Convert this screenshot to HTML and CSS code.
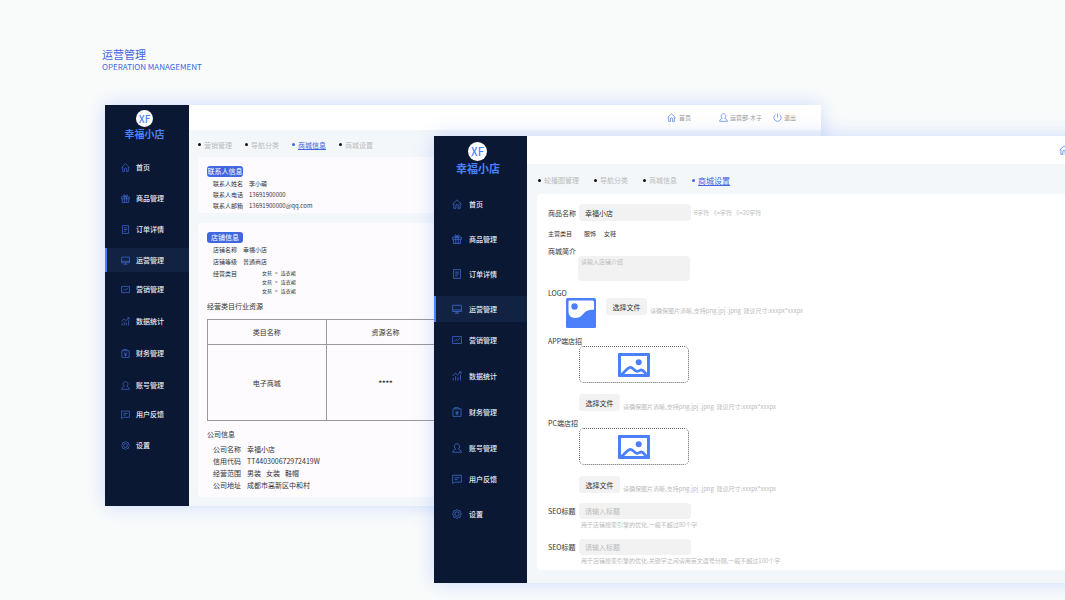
FILE: index.html
```html
<!DOCTYPE html>
<html lang="zh-CN">
	<head>
		<meta charset="utf-8" />
		<meta name="viewport" content="width=device-width, initial-scale=1" />
		<title>运营管理</title>
		<link rel="stylesheet" href="styles.css">
	</head>
	<body>
		<!-- 图标 -->
		<svg class="sprite" aria-hidden="true">
			<symbol id="i-home" viewBox="0 0 16 16"><path d="M.7 8.500 8 1.300l7.300 7.200M3 7v8h3.200v-4.500a1.800 1.800 0 0 1 3.600 0V15H13V7"/></symbol>
			<symbol id="i-gift" viewBox="0 0 16 16"><path d="M1 5h14v3.500H1zM2.300 8.500V15h11.400V8.500M6 5v10M10 5v10M8 5C4 5 3.500 1.500 5.500 1.500S8 5 8 5s.500-3.500 2.500-3.500S12 5 8 5"/></symbol>
			<symbol id="i-order" viewBox="0 0 16 16"><path d="M2.500 1h11v14h-11zM5 5h6M5 8h6M5 11h4"/></symbol>
			<symbol id="i-screen" viewBox="0 0 16 16"><path d="M1 2h14v10H1zM1 9.500h14M8 12v2.500M4.500 14.700h7"/></symbol>
			<symbol id="i-chart" viewBox="0 0 16 16"><path d="M1 2.500h14v11H1zM3.500 10l3-3 2.200 2 4-4"/></symbol>
			<symbol id="i-data" viewBox="0 0 16 16"><path d="M2 15v-4M5.700 15V8.500M9.500 15v-5M13.500 15V6M1 8l4.500-4.500 3.200 3L14 1.500M11 1.500h3.500v3"/></symbol>
			<symbol id="i-money" viewBox="0 0 16 16"><path d="M1.500 3H4V1h6.500l2 2h2v12h-13zM4 3h8.500M5.500 6 8 9l2.500-3M8 9v4M5.700 9h4.600M5.700 11h4.600"/></symbol>
			<symbol id="i-user" viewBox="0 0 16 16"><path d="M6 9.300a4.300 4.300 0 1 1 4 0M6 9.300C3.500 10 1.500 12 1 14.800h14C14.500 12 12.500 10 10 9.300"/></symbol>
			<symbol id="i-chat" viewBox="0 0 16 16"><path d="M1 2h14v11H4.500L1 15zM4 6h8M4 9h5"/></symbol>
			<symbol id="i-set" viewBox="0 0 16 16"><path d="m8 .8 2.200 1.700 2.900.400.400 2.900L15.200 8l-1.700 2.200-.4 2.900-2.900.4L8 15.200l-2.200-1.700-2.900-.4-.4-2.900L.8 8l1.700-2.200.4-2.900 2.900-.4z"/><circle cx="8" cy="8" r="3.500"/></symbol>
			<symbol id="i-power" viewBox="0 0 16 16"><path d="M8 1v7M4.500 2.800a6.500 6.500 0 1 0 7 0"/></symbol>
			<symbol id="i-photo" viewBox="0 0 32 24">
				<path fill="#4c80fa" fill-rule="evenodd" d="M1 0h30a1 1 0 0 1 1 1v22a1 1 0 0 1-1 1H1a1 1 0 0 1-1-1V1a1 1 0 0 1 1-1zM3 3v18h26V3z"/>
				<circle cx="20.700" cy="9.200" r="3" fill="#4c80fa"/>
				<path fill="none" stroke="#4c80fa" stroke-width="2.800" d="M3.500 21.500C7.500 19 9 14.300 12.500 14.300c3.200 0 3.500 4 6.500 4 2 0 2.500-1.300 4.300-1.300 2.200 0 3.200 2.500 5.200 4.500"/>
			</symbol>
		</svg>

		<header class="title">
			<h1>运营管理</h1>
			<p>OPERATION MANAGEMENT</p>
		</header>

		<main class="stage">
			<!-- 商城信息 -->
			<section class="window back">
				<aside class="side">
					<div class="logo">XF</div>
					<div class="brand">幸福小店</div>
					<nav class="menu">
						<ul>
							<li><a href="#"><svg class="icon"><use href="#i-home"/></svg>首页</a></li>
							<li><a href="#"><svg class="icon"><use href="#i-gift"/></svg>商品管理</a></li>
							<li><a href="#"><svg class="icon"><use href="#i-order"/></svg>订单详情</a></li>
							<li><a href="#" class="active"><svg class="icon"><use href="#i-screen"/></svg>运营管理</a></li>
						</ul>
						<ul class="wide">
							<li><a href="#"><svg class="icon"><use href="#i-chart"/></svg>营销管理</a></li>
							<li><a href="#"><svg class="icon"><use href="#i-data"/></svg>数据统计</a></li>
							<li><a href="#"><svg class="icon"><use href="#i-money"/></svg>财务管理</a></li>
							<li><a href="#"><svg class="icon"><use href="#i-user"/></svg>账号管理</a></li>
						</ul>
						<ul>
							<li><a href="#"><svg class="icon"><use href="#i-chat"/></svg>用户反馈</a></li>
							<li><a href="#"><svg class="icon"><use href="#i-set"/></svg>设置</a></li>
						</ul>
					</nav>
				</aside>
				<div class="content">
					<div class="topbar">
						<a href="#" class="go-home"><svg class="icon"><use href="#i-home"/></svg>首页</a>
						<a href="#"><svg class="icon"><use href="#i-user"/></svg>运营部-木子</a>
						<a href="#"><svg class="icon"><use href="#i-power"/></svg>退出</a>
					</div>
					<nav class="tabs">
						<a href="#">营销管理</a>
						<a href="#">导航分类</a>
						<a href="#" class="active">商城信息</a>
						<a href="#">商城设置</a>
					</nav>
					<div class="card">
						<h2 class="tag">联系人信息</h2>
						<dl class="info">
							<dt>联系人姓名</dt><dd>李小萌</dd>
							<dt>联系人电话</dt><dd>13691900000</dd>
							<dt>联系人邮箱</dt><dd>13691900000@qq.com</dd>
						</dl>
					</div>
					<div class="card shop">
						<h2 class="tag">店铺信息</h2>
						<dl class="info">
							<dt>店铺名称</dt><dd>幸福小店</dd>
							<dt>店铺等级</dt><dd>普通商店</dd>
							<dt>经营类目</dt>
							<dd>
								<ul class="kinds">
									<li><span>女孩</span><span>&gt;</span><span>连衣裙</span></li>
									<li><span>女孩</span><span>&gt;</span><span>连衣裙</span></li>
									<li><span>女孩</span><span>&gt;</span><span>连衣裙</span></li>
								</ul>
							</dd>
						</dl>
						<h3>经营类目行业资源</h3>
						<table class="res">
							<thead>
								<tr><th>类目名称</th><th>资源名称</th></tr>
							</thead>
							<tbody>
								<tr><td>电子商城</td><td class="stars">****</td></tr>
							</tbody>
						</table>
						<h3>公司信息</h3>
						<dl class="info company">
							<dt>公司名称</dt><dd>幸福小店</dd>
							<dt>信用代码</dt><dd>TT440300672972419W</dd>
							<dt>经营范围</dt><dd class="scope"><span>男装</span><span>女装</span><span>鞋帽</span></dd>
							<dt>公司地址</dt><dd>成都市高新区中和村</dd>
						</dl>
					</div>
				</div>
			</section>

			<!-- 商城设置 -->
			<section class="window front">
				<aside class="side">
					<div class="logo">XF</div>
					<div class="brand">幸福小店</div>
					<nav class="menu">
						<ul>
							<li><a href="#"><svg class="icon"><use href="#i-home"/></svg>首页</a></li>
							<li><a href="#"><svg class="icon"><use href="#i-gift"/></svg>商品管理</a></li>
							<li><a href="#"><svg class="icon"><use href="#i-order"/></svg>订单详情</a></li>
							<li><a href="#" class="active"><svg class="icon"><use href="#i-screen"/></svg>运营管理</a></li>
						</ul>
						<ul class="wide">
							<li><a href="#"><svg class="icon"><use href="#i-chart"/></svg>营销管理</a></li>
							<li><a href="#"><svg class="icon"><use href="#i-data"/></svg>数据统计</a></li>
							<li><a href="#"><svg class="icon"><use href="#i-money"/></svg>财务管理</a></li>
							<li><a href="#"><svg class="icon"><use href="#i-user"/></svg>账号管理</a></li>
						</ul>
						<ul>
							<li><a href="#"><svg class="icon"><use href="#i-chat"/></svg>用户反馈</a></li>
							<li><a href="#"><svg class="icon"><use href="#i-set"/></svg>设置</a></li>
						</ul>
					</nav>
				</aside>
				<div class="content">
					<div class="topbar">
						<a href="#" class="go-home" aria-label="首页"><svg class="icon"><use href="#i-home"/></svg></a>
					</div>
					<nav class="tabs">
						<a href="#">轮播图管理</a>
						<a href="#">导航分类</a>
						<a href="#">商城信息</a>
						<a href="#" class="active">商城设置</a>
					</nav>
					<form class="card form">
						<div class="row">
							<label for="shopName">商品名称</label>
							<input type="text" class="field" id="shopName" value="幸福小店">
							<span class="hint">6字符 《=字符 《=20字符</span>
						</div>
						<div class="row kind">
							<span class="name">主营类目</span>
							<span class="value">服饰</span>
							<span>女鞋</span>
						</div>
						<div class="block">
							<label for="intro">商城简介</label>
							<textarea class="field" id="intro" placeholder="请输入店铺介绍"></textarea>
						</div>
						<div class="block logo-block">
							<span class="name">LOGO</span>
							<div class="logo-row">
								<svg class="pic" viewBox="0 0 30 30">
									<rect width="30" height="30" rx="1.500" fill="#4c80fa"/>
									<path fill="#fff" d="M3.500 2.500h23A1.500 1.500 0 0 1 28 4v7.700c-7.500-.2-9 2.300-11.500 5-2 2.200-4.500 3.300-7.500 3.300-4 0-6.500-2.800-6.500-6.500V3.500a1 1 0 0 1 1-1z"/>
									<circle cx="8.500" cy="8.500" r="3.200" fill="#4c80fa"/>
								</svg>
								<div class="file">
									<button type="button">选择文件</button>
									<span class="hint">请确保图片清晰,支持png.jpj .jpng&nbsp; 建议尺寸:xxxpx*xxxpx</span>
								</div>
							</div>
						</div>
						<div class="block">
							<span class="name">APP端店招</span>
							<div class="drop"><svg><use href="#i-photo"/></svg></div>
							<div class="file">
								<button type="button">选择文件</button>
								<span class="hint">请确保图片清晰,支持png.jpj .jpng&nbsp; 建议尺寸:xxxpx*xxxpx</span>
							</div>
						</div>
						<div class="block">
							<span class="name">PC端店招</span>
							<div class="drop"><svg><use href="#i-photo"/></svg></div>
							<div class="file">
								<button type="button">选择文件</button>
								<span class="hint">请确保图片清晰,支持png.jpj .jpng&nbsp; 建议尺寸:xxxpx*xxxpx</span>
							</div>
						</div>
						<div class="seo">
							<div class="row">
								<label for="seoTitle">SEO标题</label>
								<input type="text" class="field" id="seoTitle" placeholder="请输入标题">
							</div>
							<p class="hint">用于店铺搜索引擎的优化,一般不超过80个字</p>
							<div class="row">
								<label for="seoKey">SEO标题</label>
								<input type="text" class="field" id="seoKey" placeholder="请输入标题">
							</div>
							<p class="hint">用于店铺搜索引擎的优化,关键字之间请用英文逗号分隔,一般不超过100个字</p>
						</div>
					</form>
				</div>
			</section>
		</main>
	</body>
</html>
```
FILE: styles.css
```css
*{
	box-sizing: border-box;
}
body,h1,h2,h3,p,ul,dl,dd{
	margin: 0;
	padding: 0;
}
body{
	min-height: 100vh;
	overflow: hidden;
	background-color: #f9fbfb;
	color: #333;
	font-family: "Noto Sans CJK SC","Noto Sans",sans-serif;
	font-size: 7px;
}
ul{
	list-style: none;
}
a{
	color: inherit;
	text-decoration: none;
}
input,textarea,button{
	font-family: inherit;
	border: 0;
}
.sprite{
	position: absolute;
	width: 0;
	height: 0;
}
.icon{
	flex: none;
	width: 9px;
	height: 9px;
	fill: none;
	stroke: #4a7be8;
	stroke-width: 1.2;
}

/* 页面标题 */
.title{
	padding: 47px 102px 32px;
	color: #4166e0;
}
.title h1{
	font-size: 11px;
	font-weight: 400;
	line-height: 14px;
}
.title p{
	font-size: 8px;
	line-height: 12px;
}

/* 两个窗口叠放 */
.stage{
	position: relative;
}
.window{
	display: flex;
	background-color: #f3f7fa;
	box-shadow: 0 0 18px rgba(74,124,250,0.25);
}
.back{
	width: calc(100% - 349px);
	margin-left: 105px;
}
.front{
	position: absolute;
	top: 31px;
	left: 434px;
	right: -165px;
}

/* 侧边栏 */
.side{
	flex: none;
	width: 84px;
	padding-top: 5px;
	background-color: #0b1833;
}
.front .side{
	width: 93px;
	padding-top: 6px;
}
.logo{
	width: 17px;
	height: 17px;
	margin-left: 31px;
	border-radius: 50%;
	background-color: #fff;
	color: #4c80fa;
	font-size: 10px;
	font-weight: 500;
	line-height: 17px;
	text-align: center;
}
.front .logo{
	width: 19px;
	height: 19px;
	margin-left: 34px;
	font-size: 11px;
	line-height: 19px;
}
.brand{
	padding-right: 5px;
	color: #4c80fa;
	font-size: 10px;
	font-weight: 700;
	line-height: 14px;
	text-align: center;
}
.front .brand{
	font-size: 11px;
	line-height: 15px;
}
.menu{
	display: flex;
	flex-direction: column;
	gap: 5px;
	margin-top: 14px;
}
.menu ul{
	display: flex;
	flex-direction: column;
	gap: 7px;
}
.menu .wide{
	gap: 8px;
}
.menu a{
	display: flex;
	align-items: center;
	gap: 6px;
	height: 24px;
	padding-left: 14px;
	border-left: 2px solid transparent;
	color: #e8ebf2;
	font-weight: 500;
}
.menu .icon{
	stroke: #416fd6;
}
.menu a.active{
	border-left-color: #4c80fa;
	background-color: #112242;
}
.front .menu{
	margin-top: 15px;
}
.front .menu ul{
	gap: 9px;
}
.front .menu .wide{
	gap: 10px;
}
.front .menu a{
	gap: 7px;
	height: 26px;
	padding-left: 16px;
}
.front .icon{
	width: 10px;
	height: 10px;
}

/* 右侧内容 */
.content{
	flex: 1;
	min-width: 0;
	padding-bottom: 9px;
}
.front .content{
	padding-bottom: 13px;
}
.topbar{
	display: flex;
	justify-content: flex-end;
	gap: 11px;
	height: 25px;
	padding-right: 25px;
	background-color: #fff;
	color: #999;
	font-size: 6px;
}
.topbar a{
	display: flex;
	align-items: center;
	gap: 2px;
}
.topbar .go-home{
	gap: 3px;
	margin-right: 17px;
}
.front .topbar{
	height: 28px;
	padding-right: 144px;
}
.tabs{
	display: flex;
	align-items: center;
	gap: 13px;
	height: 27px;
	padding: 2px 9px 0;
	color: #bbb;
}
.tabs a{
	display: flex;
	align-items: center;
	gap: 3px;
}
.tabs a::before{
	content: "";
	width: 3px;
	height: 3px;
	border-radius: 50%;
	background-color: #111;
}
.tabs .active{
	color: #4166e0;
	text-decoration: underline;
}
.tabs .active::before{
	background-color: #4166e0;
}
.front .tabs{
	gap: 15px;
	height: 30px;
	padding-left: 11px;
}
.front .tabs .active{
	font-size: 8px;
}
.card{
	margin: 0 9px;
	padding: 9px 9px 2px;
	border-radius: 4px;
	background-color: #fdfbfd;
}
.shop{
	margin-top: 10px;
	padding-bottom: 6px;
}

/* 商城信息 */
.tag{
	width: 36px;
	border-radius: 3px;
	background-color: #4166e0;
	color: #fff;
	font-size: 7px;
	font-weight: 400;
	line-height: 11px;
	text-align: center;
	white-space: nowrap;
}
.info{
	display: grid;
	grid-template-columns: auto 1fr;
	column-gap: 6px;
	padding: 1px 0 0 6px;
	font-size: 6px;
	line-height: 11px;
}
.shop .info{
	line-height: 12px;
}
.shop .company{
	padding-top: 3px;
	font-size: 7px;
}
.kinds{
	padding: 0 0 1px 19px;
	font-size: 5px;
	line-height: 9px;
}
.kinds li,
.scope{
	display: flex;
	gap: 3px;
}
.scope{
	gap: 5px;
}
.card h3{
	margin-top: 5px;
	font-size: 7px;
	font-weight: 400;
	line-height: 11px;
}
.res{
	width: 40%;
	margin: 7px 0 8px;
	border-collapse: collapse;
	table-layout: fixed;
	text-align: center;
}
.res th,
.res td{
	height: 25px;
	padding: 0;
	border: 1px solid #999;
	font-weight: 400;
}
.res td{
	height: 76px;
}
.res .stars{
	font-weight: 700;
}

/* 商城设置表单 */
.form{
	display: flex;
	flex-direction: column;
	gap: 7px;
	margin: 0 10px;
	padding: 10px 11px 2px;
	background-color: #fff;
}
.row{
	display: flex;
	align-items: center;
	gap: 3px;
}
.row label,
.row .name{
	width: 28px;
	white-space: nowrap;
}
.block label,
.block .name{
	display: block;
	line-height: 10px;
}
.field{
	width: 112px;
	height: 17px;
	padding: 0 6px;
	border-radius: 4px;
	background-color: #f2f2f2;
	color: #333;
	font-size: 7px;
}
.field::placeholder{
	color: #bbb;
}
textarea.field{
	display: block;
	height: 25px;
	margin-left: 30px;
	padding: 1px 3px;
	font-size: 6px;
	line-height: 9px;
	resize: none;
}
.kind{
	gap: 8px;
	padding-top: 1px;
	font-size: 6px;
	line-height: 10px;
}
.hint{
	color: #bbb;
	font-size: 6px;
	line-height: 8px;
	white-space: nowrap;
}
.file{
	display: flex;
	align-items: flex-end;
	gap: 3px;
	margin: 11px 0 0 31px;
}
.file button{
	width: 41px;
	height: 17px;
	padding: 0;
	border-radius: 3px;
	background-color: #f2f2f2;
	color: #333;
	font-size: 7px;
}
.logo-block{
	padding-bottom: 1px;
}
.logo-row{
	display: flex;
	align-items: flex-start;
	gap: 10px;
	padding-left: 18px;
}
.logo-row .file{
	margin: 0;
}
.pic{
	width: 30px;
	height: 30px;
}
.drop{
	display: flex;
	align-items: center;
	justify-content: center;
	width: 110px;
	height: 37px;
	margin-left: 31px;
	border: 1px dotted #666;
	border-radius: 5px;
}
.drop svg{
	width: 32px;
	height: 24px;
}
.seo{
	margin-top: 3px;
}
.seo .field{
	height: 16px;
}
.seo .hint{
	padding: 2px 0 10px 33px;
}
.seo .hint:last-child{
	padding-bottom: 3px;
}
```
